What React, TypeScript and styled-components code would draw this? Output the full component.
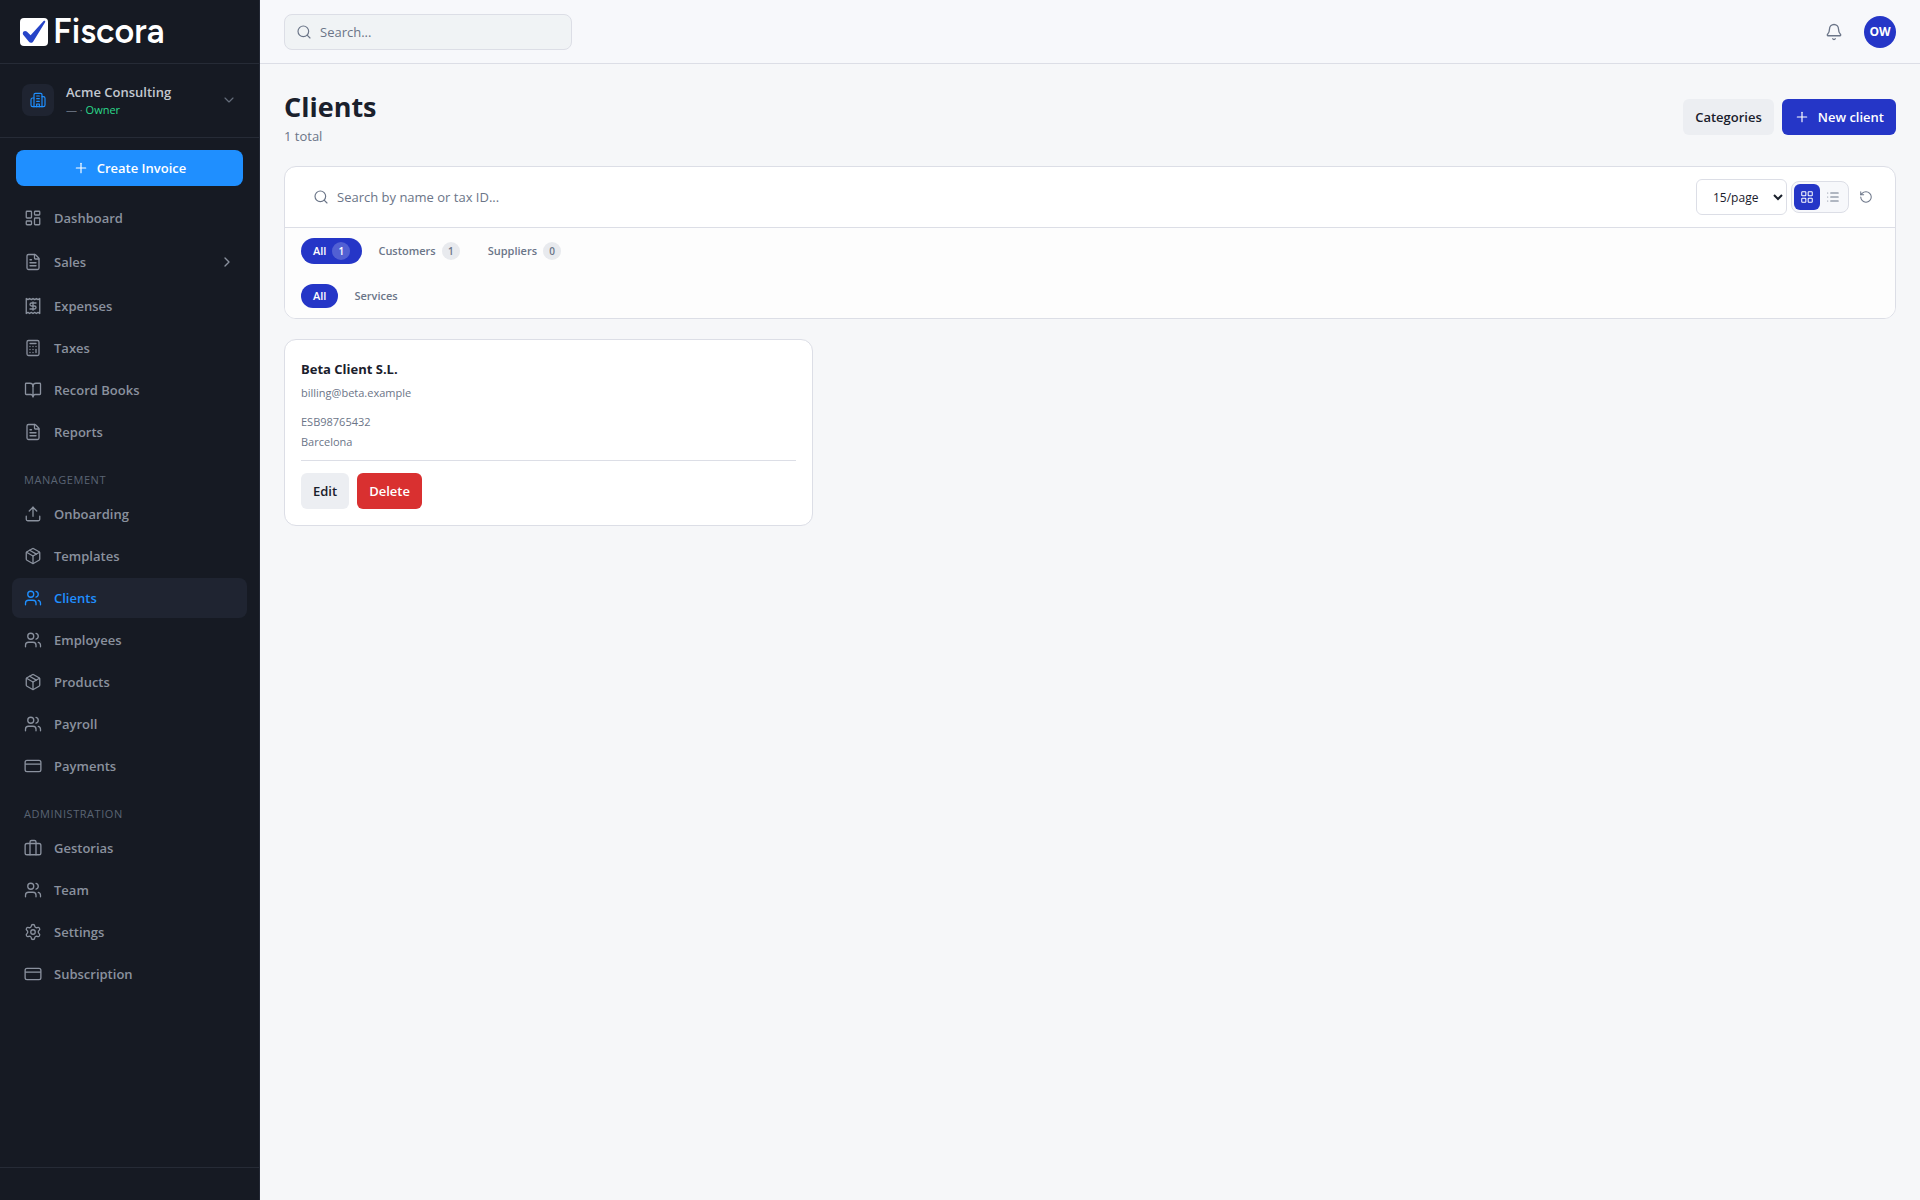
import React from "react";
import styled, { createGlobalStyle } from "styled-components";
import {
  Bell,
  BookOpen,
  Calculator,
  ChevronDown,
  ChevronRight,
  FileText,
  LayoutDashboard,
  LayoutGrid,
  List,
  Package,
  Plus,
  RotateCcw,
  Search,
  Settings,
  Upload,
  Users,
} from "lucide-react";

const GlobalStyle = createGlobalStyle`
  *, *::before, *::after { box-sizing: border-box; }
  body {
    margin: 0;
    background: #f6f7f9;
    color: #1a202c;
    font-family: "Segoe UI", "Open Sans", "Noto Sans", sans-serif;
    font-size: 13px;
    line-height: 20px;
  }
  button, input, select { font: inherit; color: inherit; margin: 0; }
  button { cursor: pointer; }
  h1, h2, p, ul { margin: 0; padding: 0; }
  ul { list-style: none; }
`;

const Shell = styled.div`
  display: flex;
  min-height: 100vh;
`;

const Sidebar = styled.aside`
  position: sticky;
  top: 0;
  display: flex;
  flex-direction: column;
  flex: none;
  width: 260px;
  height: 100vh;
  background: #161a23;
  border-right: 1px solid #232834;
`;

const Brand = styled.a`
  display: flex;
  align-items: center;
  gap: 4px;
  height: 64px;
  padding: 0 20px;
  border-bottom: 1px solid #262b36;
  color: #fff;
  font-family: Figtree, Lato, sans-serif;
  font-size: 34px;
  font-weight: 600;
  line-height: 40px;
  text-decoration: none;
`;

const OrgButton = styled.button`
  display: flex;
  align-items: center;
  gap: 12px;
  height: 74px;
  padding: 0 22px 2px;
  border: 0;
  border-bottom: 1px solid #262b36;
  background: none;
  color: #646c7a;
  text-align: left;
`;

const OrgTile = styled.span`
  display: grid;
  place-items: center;
  width: 32px;
  height: 32px;
  border-radius: 8px;
  background: #1f2431;
  color: #1f8fff;
`;

const OrgText = styled.span`
  display: flex;
  flex: 1;
  flex-direction: column;
  font-size: 11px;
  line-height: 16px;
`;

const OrgName = styled.strong`
  color: #c3c8d0;
  font-size: 13px;
  font-weight: 600;
  line-height: 20px;
`;

const Role = styled.span`
  color: #2bd98a;
`;

const CreateButton = styled.button`
  display: flex;
  align-items: center;
  justify-content: center;
  gap: 8px;
  height: 36px;
  flex: none;
  margin: 12px 16px;
  border: 0;
  border-radius: 8px;
  background: #1f8fff;
  color: #fff;
  font-weight: 600;
`;

const Nav = styled.nav`
  flex: 1;
  min-height: 0;
  padding: 0 12px;
  overflow: hidden;
`;

const NavList = styled.ul`
  display: flex;
  flex-direction: column;
  gap: 2px;
`;

const NavHeading = styled.h2`
  padding: 18px 12px 4px;
  color: #5a6473;
  font-size: 11px;
  font-weight: 400;
  letter-spacing: 0.05em;
  line-height: 20px;
  text-transform: uppercase;
`;

const NavLink = styled.a<{ $active?: boolean; $tall?: boolean }>`
  display: flex;
  align-items: center;
  gap: 12px;
  height: ${(p) => (p.$tall ? 44 : 40)}px;
  padding: 0 12px;
  border-radius: 8px;
  background: ${(p) => (p.$active ? "#1f2431" : "transparent")};
  color: ${(p) => (p.$active ? "#1f8fff" : "#8a919e")};
  font-weight: 600;
  text-decoration: none;
`;

const NavLabel = styled.span`
  flex: 1;
`;

const SideFooter = styled.footer`
  height: 33px;
  border-top: 1px solid #262b36;
`;

const Page = styled.div`
  flex: 1;
  min-width: 0;
`;

const TopBar = styled.header`
  display: flex;
  align-items: center;
  justify-content: space-between;
  height: 64px;
  padding: 0 24px;
  border-bottom: 1px solid #dcdee6;
  background: #f7f8fb;
`;

const SearchBox = styled.label`
  display: flex;
  align-items: center;
  gap: 8px;
  width: 288px;
  height: 36px;
  padding: 0 11px;
  border: 1px solid #dcdee6;
  border-radius: 8px;
  background: #f0f3f5;
  color: #6b7588;
`;

const PlainInput = styled.input`
  flex: 1;
  min-width: 0;
  padding: 0;
  border: 0;
  outline: 0;
  background: none;
  &::placeholder { color: #6b7588; opacity: 1; }
`;

const Account = styled.div`
  display: flex;
  align-items: center;
  gap: 12px;
`;

const IconButton = styled.button<{ $size: number; $active?: boolean }>`
  display: grid;
  place-items: center;
  width: ${(p) => p.$size}px;
  height: ${(p) => p.$size}px;
  padding: 0;
  border: 0;
  border-radius: 6px;
  background: ${(p) => (p.$active ? "#2536c7" : "transparent")};
  color: ${(p) => (p.$active ? "#fff" : "#6b7588")};
`;

const Avatar = styled.button`
  width: 32px;
  height: 32px;
  padding: 0;
  border: 0;
  border-radius: 50%;
  background: #2536c7;
  color: #fff;
  font-size: 12px;
  font-weight: 700;
`;

const Main = styled.main`
  padding: 24px;
`;

const PageHead = styled.div`
  display: flex;
  align-items: center;
  justify-content: space-between;
  margin-bottom: 20px;
`;

const Title = styled.h1`
  font-size: 27px;
  font-weight: 700;
  line-height: 38px;
`;

const Muted = styled.p`
  color: #6b7588;
`;

const Actions = styled.div`
  display: flex;
  gap: 8px;
`;

const tones = {
  neutral: ["#eceef2", "#1a202c"],
  primary: ["#2536c7", "#fff"],
  danger: ["#d93030", "#fff"],
};

const Button = styled.button<{ $tone: keyof typeof tones }>`
  display: flex;
  align-items: center;
  gap: 8px;
  height: 36px;
  padding: 0 12px;
  border: 0;
  border-radius: 6px;
  background: ${(p) => tones[p.$tone][0]};
  color: ${(p) => tones[p.$tone][1]};
  font-weight: 600;
`;

const Panel = styled.section`
  margin-bottom: 20px;
  border: 1px solid #dcdee6;
  border-radius: 12px;
  background: #fff;
  overflow: hidden;
`;

const FilterBar = styled.div`
  display: flex;
  align-items: center;
  gap: 4px;
  padding: 12px 16px;
  border-bottom: 1px solid #dcdee6;
`;

const FilterSearch = styled.label`
  display: flex;
  align-items: center;
  flex: 1;
  gap: 8px;
  height: 36px;
  padding: 0 12px;
  color: #6b7588;
`;

const PageSize = styled.select`
  width: 91px;
  height: 36px;
  padding: 0 0 0 12px;
  border: 1px solid #dcdee6;
  border-radius: 6px;
  background: #fff;
  font-size: 12px;
`;

const ViewToggle = styled.div`
  display: flex;
  padding: 2px;
  border: 1px solid #dcdee6;
  border-radius: 8px;
  background: #f7f8fb;
`;

const ChipRow = styled.div`
  display: flex;
  align-items: center;
  gap: 4px;
  padding: 10px 16px;
  background: #fdfdfd;
`;

const Chip = styled.button<{ $active?: boolean }>`
  display: flex;
  align-items: center;
  gap: 6px;
  min-height: 24px;
  padding: 4px 12px;
  border: 0;
  border-radius: 13px;
  background: ${(p) => (p.$active ? "#2536c7" : "transparent")};
  color: ${(p) => (p.$active ? "#fff" : "#6b7588")};
  font-size: 11px;
  font-weight: 600;
  line-height: 16px;
`;

const Count = styled.span<{ $active?: boolean }>`
  width: 18px;
  border-radius: 9px;
  background: ${(p) => (p.$active ? "#5260d3" : "#e8eaee")};
  font-size: 10px;
  line-height: 18px;
  text-align: center;
`;

const Cards = styled.div`
  display: grid;
  grid-template-columns: repeat(3, minmax(0, 1fr));
  gap: 12px;
`;

const Card = styled.article`
  padding: 16px;
  border: 1px solid #dcdee6;
  border-radius: 12px;
  background: #fff;
`;

const CardName = styled.h2`
  font-size: 13px;
  font-weight: 700;
  line-height: 26px;
`;

const CardText = styled.div`
  padding-top: 1px;
  margin-bottom: 8px;
  color: #6b7588;
  font-size: 11px;
  line-height: 20px;
`;

const CardActions = styled.div`
  display: flex;
  gap: 8px;
  padding-top: 12px;
  border-top: 1px solid #dcdee6;
`;

type Icon = React.ComponentType<{ size?: number; strokeWidth?: number }>;
type Item = { label: string; icon: Icon; active?: boolean; nested?: boolean };

/* Receipt with scalloped edges and a dollar sign */
const ExpenseIcon: Icon = ({ size = 18, strokeWidth = 1.5 }) => (
  <svg
    width={size}
    height={size}
    viewBox="0 0 24 24"
    fill="none"
    stroke="currentColor"
    strokeWidth={strokeWidth}
    strokeLinecap="round"
    strokeLinejoin="round"
    aria-hidden="true"
  >
    <path d="M3 2v20l2.25-1.5L7.5 22l2.25-1.5L12 22l2.25-1.5L16.5 22l2.25-1.5L21 22V2l-2.25 1.5L16.5 2l-2.25 1.5L12 2 9.750 3.500 7.500 2 5.250 3.500Z" />
    <path d="M16 8h-6a2 2 0 1 0 0 4h4a2 2 0 1 1 0 4H8" />
    <path d="M12 17.500v-11" />
  </svg>
);

/* Suitcase with two vertical straps */
const CaseIcon: Icon = ({ size = 18, strokeWidth = 1.5 }) => (
  <svg
    width={size}
    height={size}
    viewBox="0 0 24 24"
    fill="none"
    stroke="currentColor"
    strokeWidth={strokeWidth}
    strokeLinecap="round"
    strokeLinejoin="round"
    aria-hidden="true"
  >
    <rect x="1.5" y="6" width="21" height="15" rx="2.5" />
    <path d="M8 21V4a2 2 0 0 1 2-2h4a2 2 0 0 1 2 2v17" />
  </svg>
);

/* Office block with two side wings */
const OrgIcon = () => (
  <svg
    width="16"
    height="16"
    viewBox="0 0 24 24"
    fill="none"
    stroke="currentColor"
    strokeWidth="1.75"
    strokeLinecap="round"
    strokeLinejoin="round"
    aria-hidden="true"
  >
    <path d="M6 22V4a2 2 0 0 1 2-2h8a2 2 0 0 1 2 2v18Z" />
    <path d="M6 9H4a2.500 2.500 0 0 0-2.500 2.500v8A2.500 2.500 0 0 0 4 22h2M18 7h2a2.500 2.500 0 0 1 2.500 2.500v10A2.500 2.500 0 0 1 20 22h-2" />
    <path d="M10 6h4M10 10h4M10 14h4M10 22v-4h4v4" />
  </svg>
);

const CardIcon: Icon = ({ size = 18, strokeWidth = 1.5 }) => (
  <svg
    width={size}
    height={size}
    viewBox="0 0 24 24"
    fill="none"
    stroke="currentColor"
    strokeWidth={strokeWidth}
    aria-hidden="true"
  >
    <rect x="1.5" y="4.5" width="21" height="15" rx="2.5" />
    <path d="M1.5 9.5h21" />
  </svg>
);

const LogoMark = () => (
  <svg width="29" height="28" viewBox="0 0 29 28" aria-hidden="true">
    <rect width="28" height="28" rx="4" fill="#fff" />
    <path
      d="M2.8 15.2C3 13 5.2 12.2 6.8 13.6L10.6 17.2L23.6 3C24.6 2.1 25.8 3 25.1 4.2L13.4 23.3C12.2 25.3 10 25.3 8.7 23.5L3.2 16.8C2.9 16.3 2.7 15.8 2.8 15.2Z"
      fill="#2644c8"
    />
  </svg>
);

const mainItems: Item[] = [
  { label: "Dashboard", icon: LayoutDashboard },
  { label: "Sales", icon: FileText, nested: true },
  { label: "Expenses", icon: ExpenseIcon },
  { label: "Taxes", icon: Calculator },
  { label: "Record Books", icon: BookOpen },
  { label: "Reports", icon: FileText },
];

const managementItems: Item[] = [
  { label: "Onboarding", icon: Upload },
  { label: "Templates", icon: Package },
  { label: "Clients", icon: Users, active: true },
  { label: "Employees", icon: Users },
  { label: "Products", icon: Package },
  { label: "Payroll", icon: Users },
  { label: "Payments", icon: CardIcon },
];

const adminItems: Item[] = [
  { label: "Gestorias", icon: CaseIcon },
  { label: "Team", icon: Users },
  { label: "Settings", icon: Settings },
  { label: "Subscription", icon: CardIcon },
];

const NavGroup = ({ items }: { items: Item[] }) => (
  <NavList>
    {items.map(({ label, icon: ItemIcon, active, nested }) => (
      <li key={label}>
        <NavLink
          href="#"
          $active={active}
          $tall={nested}
          aria-current={active ? "page" : undefined}
        >
          <ItemIcon size={18} strokeWidth={1.75} />
          <NavLabel>{label}</NavLabel>
          {nested && <ChevronRight size={16} strokeWidth={2} />}
        </NavLink>
      </li>
    ))}
  </NavList>
);

export default function App() {
  return (
    <>
      <GlobalStyle />
      <Shell>
        <Sidebar>
          <Brand href="#">
            <LogoMark />
            Fiscora
          </Brand>
          <OrgButton type="button">
            <OrgTile>
              <OrgIcon />
            </OrgTile>
            <OrgText>
              <OrgName>Acme Consulting</OrgName>
              <span>
                — · <Role>Owner</Role>
              </span>
            </OrgText>
            <ChevronDown size={16} strokeWidth={1.75} />
          </OrgButton>
          <CreateButton type="button">
            <Plus size={16} strokeWidth={1.75} />
            Create Invoice
          </CreateButton>
          <Nav aria-label="Main">
            <NavGroup items={mainItems} />
            <NavHeading>Management</NavHeading>
            <NavGroup items={managementItems} />
            <NavHeading>Administration</NavHeading>
            <NavGroup items={adminItems} />
          </Nav>
          <SideFooter />
        </Sidebar>

        <Page>
          <TopBar>
            <SearchBox>
              <Search size={16} strokeWidth={1.75} />
              <PlainInput type="search" placeholder="Search..." aria-label="Search" />
            </SearchBox>
            <Account>
              <IconButton type="button" $size={36} aria-label="Notifications">
                <Bell size={18} strokeWidth={1.75} />
              </IconButton>
              <Avatar type="button">OW</Avatar>
            </Account>
          </TopBar>

          <Main>
            <PageHead>
              <div>
                <Title>Clients</Title>
                <Muted>1 total</Muted>
              </div>
              <Actions>
                <Button type="button" $tone="neutral">
                  Categories
                </Button>
                <Button type="button" $tone="primary">
                  <Plus size={16} strokeWidth={1.75} />
                  New client
                </Button>
              </Actions>
            </PageHead>

            <Panel>
              <FilterBar>
                <FilterSearch>
                  <Search size={16} strokeWidth={1.75} />
                  <PlainInput
                    type="search"
                    placeholder="Search by name or tax ID..."
                    aria-label="Search by name or tax ID"
                  />
                </FilterSearch>
                <PageSize aria-label="Rows per page" defaultValue="15">
                  <option value="15">15/page</option>
                </PageSize>
                <ViewToggle>
                  <IconButton type="button" $size={26} $active aria-label="Grid view">
                    <LayoutGrid size={14} strokeWidth={1.75} />
                  </IconButton>
                  <IconButton type="button" $size={26} aria-label="List view">
                    <List size={14} strokeWidth={1.75} />
                  </IconButton>
                </ViewToggle>
                <IconButton type="button" $size={26} aria-label="Refresh">
                  <RotateCcw size={14} strokeWidth={1.75} />
                </IconButton>
              </FilterBar>
              <ChipRow>
                <Chip type="button" $active>
                  All <Count $active>1</Count>
                </Chip>
                <Chip type="button">
                  Customers <Count>1</Count>
                </Chip>
                <Chip type="button">
                  Suppliers <Count>0</Count>
                </Chip>
              </ChipRow>
              <ChipRow>
                <Chip type="button" $active>
                  All
                </Chip>
                <Chip type="button">Services</Chip>
              </ChipRow>
            </Panel>

            <Cards>
              <Card>
                <CardName>Beta Client S.L.</CardName>
                <CardText>billing@beta.example</CardText>
                <CardText>
                  <p>ESB98765432</p>
                  <p>Barcelona</p>
                </CardText>
                <CardActions>
                  <Button type="button" $tone="neutral">
                    Edit
                  </Button>
                  <Button type="button" $tone="danger">
                    Delete
                  </Button>
                </CardActions>
              </Card>
            </Cards>
          </Main>
        </Page>
      </Shell>
    </>
  );
}
